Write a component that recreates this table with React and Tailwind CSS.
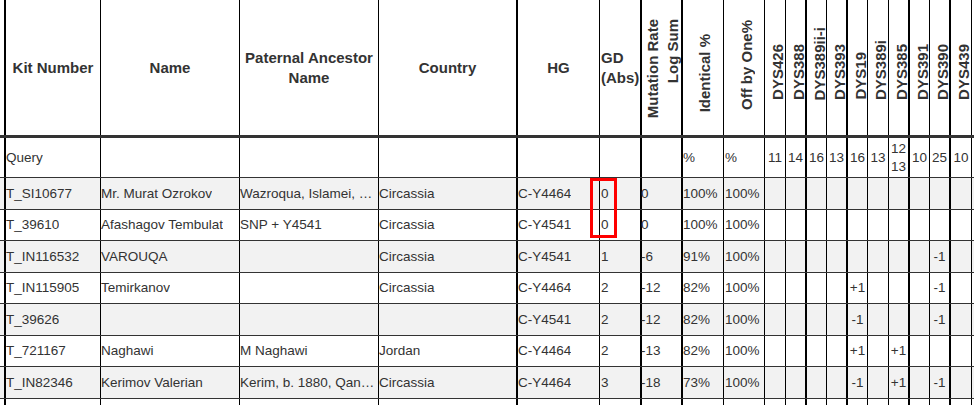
import React from "react";

const GRID =
  "grid grid-cols-[6px_95px_139px_139px_139px_82px_42px_41px_41px_41px_21px_21px_20px_21px_20px_21px_21px_20px_21px_21px_1fr]";

// right border per column (thick lines split the panels)
const BR = [
  "border-r-2", "border-r", "border-r", "border-r", "border-r-2", "border-r", "border-r-2",
  "border-r-2", "border-r", "border-r", "border-r", "border-r-2", "border-r", "border-r-2",
  "border-r", "border-r", "border-r-2", "border-r", "border-r-2", "border-r", "",
];

const dysNames = [
  "DYS426", "DYS388", "DYS389ii-i", "DYS393", "DYS19",
  "DYS389i", "DYS385", "DYS391", "DYS390", "DYS439",
];

const query = {
  kit: "Query", name: "", anc: "", country: "", hg: "", gd: "", mut: "",
  ident: "%", off: "%",
  dys: ["11", "14", "16", "13", "16", "13", "12 13", "10", "25", "10"],
};

const rows = [
  { kit: "T_SI10677", name: "Mr. Murat Ozrokov", anc: "Wazroqua, Islamei, Kabarda", country: "Circassia", hg: "C-Y4464", gd: "0", mut: "0", ident: "100%", off: "100%", dys: {} },
  { kit: "T_39610", name: "Afashagov Tembulat", anc: "SNP + Y4541", country: "Circassia", hg: "C-Y4541", gd: "0", mut: "0", ident: "100%", off: "100%", dys: {} },
  { kit: "T_IN116532", name: "VAROUQA", anc: "", country: "Circassia", hg: "C-Y4541", gd: "1", mut: "-6", ident: "91%", off: "100%", dys: { 8: "-1" } },
  { kit: "T_IN115905", name: "Temirkanov", anc: "", country: "Circassia", hg: "C-Y4464", gd: "2", mut: "-12", ident: "82%", off: "100%", dys: { 4: "+1", 8: "-1" } },
  { kit: "T_39626", name: "", anc: "", country: "", hg: "C-Y4541", gd: "2", mut: "-12", ident: "82%", off: "100%", dys: { 4: "-1", 8: "-1" } },
  { kit: "T_721167", name: "Naghawi", anc: "M Naghawi", country: "Jordan", hg: "C-Y4464", gd: "2", mut: "-13", ident: "82%", off: "100%", dys: { 4: "+1", 6: "+1" } },
  { kit: "T_IN82346", name: "Kerimov Valerian", anc: "Kerim, b. 1880, Qanzhasi", country: "Circassia", hg: "C-Y4464", gd: "3", mut: "-18", ident: "73%", off: "100%", dys: { 4: "-1", 6: "+1", 8: "-1" } },
  { kit: "", name: "", anc: "", country: "", hg: "", gd: "", mut: "", ident: "", off: "", dys: {} },
];

const heights = ["h-[32px]", "h-[31px]", "h-[32px]", "h-[31px]", "h-[32px]", "h-[31px]", "h-[32px]", "h-[31px]"];

function Header() {
  const plain = "flex items-center justify-center text-center border-r-black";
  return (
    <div className={`${GRID} h-[138px] border-b-[3px] border-b-[#333] font-bold text-[15px] leading-[20px]`}>
      <div className={`${BR[0]} border-r-black`} />
      <div className={`${plain} ${BR[1]}`}>Kit Number</div>
      <div className={`${plain} ${BR[2]}`}>Name</div>
      <div className={`${plain} ${BR[3]} px-1`}>Paternal Ancestor Name</div>
      <div className={`${plain} ${BR[4]}`}>Country</div>
      <div className={`${plain} ${BR[5]}`}>HG</div>
      <div className={`flex items-center pl-px text-left ${BR[6]} border-r-black`}>GD (Abs)</div>
      <div className={`flex items-end pl-px pb-[17px] ${BR[7]} border-r-black`}>
        <div className="shrink-0 [writing-mode:vertical-rl] rotate-180 text-end whitespace-nowrap">
          Mutation Rate
          <br />
          Log Sum
        </div>
      </div>
      <div className={`flex items-end pl-[12px] pb-[23px] ${BR[8]} border-r-black`}>
        <div className="shrink-0 [writing-mode:vertical-rl] rotate-180 whitespace-nowrap">Identical %</div>
      </div>
      <div className={`flex items-end pl-[13px] pb-[25px] ${BR[9]} border-r-black`}>
        <div className="shrink-0 [writing-mode:vertical-rl] rotate-180 whitespace-nowrap">Off by One%</div>
      </div>
      {dysNames.map((d, i) => (
        <div key={d} className={`flex items-end pl-[5px] pb-[35px] ${BR[10 + i]} border-r-black`}>
          <div className="shrink-0 [writing-mode:vertical-rl] rotate-180 whitespace-nowrap leading-none">{d}</div>
        </div>
      ))}
      <div />
    </div>
  );
}

function Row({ r, bg, h }) {
  const left = (i, v, extra = "") => (
    <div className={`flex items-center min-w-0 ${BR[i]} border-r-black`}>
      <span className={`truncate ${extra}`}>{v}</span>
    </div>
  );
  const dys = dysNames.map((_, i) => (Array.isArray(r.dys) ? r.dys[i] : r.dys[i] || ""));

  return (
    <div className={`${GRID} ${h} ${bg} border-b border-b-[#333]`}>
      <div className={`${BR[0]} border-r-black`} />
      {left(1, r.kit)}
      {left(2, r.name)}
      {left(3, r.anc)}
      {left(4, r.country)}
      {left(5, r.hg)}
      {left(6, r.gd, "pl-px")}
      {left(7, r.mut, "-ml-px")}
      {left(8, r.ident)}
      {left(9, r.off, "pl-px")}
      {dys.map((v, i) => (
        <div key={i} className={`flex items-center justify-center text-center ${BR[10 + i]} border-r-black`}>
          {v}
        </div>
      ))}
      <div />
    </div>
  );
}

export default function App() {
  return (
    <div className="relative w-[974px] h-[405px] overflow-hidden bg-white text-[#333] font-['Liberation_Sans',Arial,sans-serif]">
      <Header />
      <div className="text-[13.5px] leading-[18px]">
        <Row r={query} bg="bg-white" h="h-[40px]" />
        {rows.map((r, i) => (
          <Row key={i} r={r} bg={i % 2 === 0 ? "bg-[#f2f2f2]" : "bg-white"} h={heights[i]} />
        ))}
      </div>

      {/* highlight drawn over the GD cells */}
      <div className="absolute left-[590px] top-[178px] w-[27px] h-[60px] border-[3px] border-[#ff0000]" />
    </div>
  );
}
